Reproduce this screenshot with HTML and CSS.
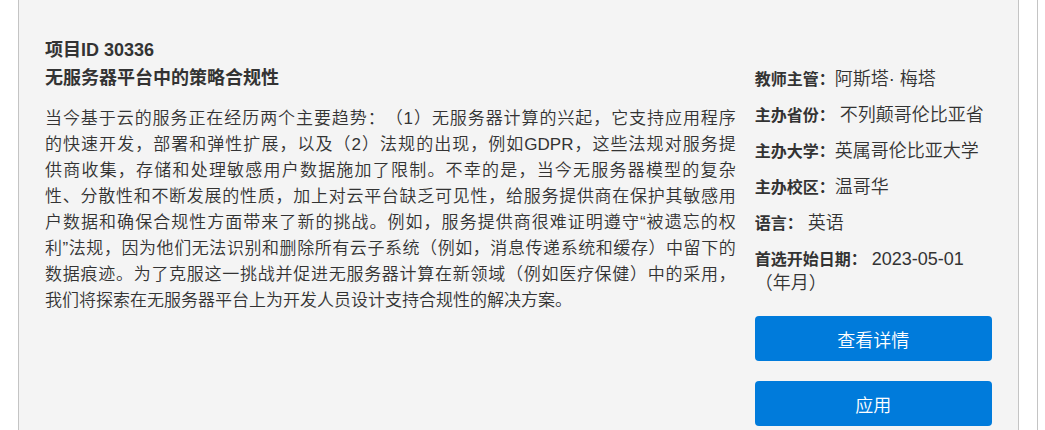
FILE: index.html
```html
<!DOCTYPE html>
<html lang="zh-CN">
<head>
<meta charset="utf-8">
<meta name="viewport" content="width=device-width, initial-scale=1">
<title>无服务器平台中的策略合规性</title>
<link rel="stylesheet" href="styles.css">
</head>
<body>
<main class="listing">
  <article class="card">
    <div class="project">
      <h2 class="project-title">项目ID 30336<br>无服务器平台中的策略合规性</h2>
      <p class="summary">
        <span class="line">当今基于云的服务正在经历两个主要趋势：（1）无服务器计算的兴起，它支持应用程序</span>
        <span class="line">的快速开发，部署和弹性扩展，以及（2）法规的出现，例如GDPR，这些法规对服务提</span>
        <span class="line">供商收集，存储和处理敏感用户数据施加了限制。不幸的是，当今无服务器模型的复杂</span>
        <span class="line">性、分散性和不断发展的性质，加上对云平台缺乏可见性，给服务提供商在保护其敏感用</span>
        <span class="line">户数据和确保合规性方面带来了新的挑战。例如，服务提供商很难证明遵守“被遗忘的权</span>
        <span class="line">利”法规，因为他们无法识别和删除所有云子系统（例如，消息传递系统和缓存）中留下的</span>
        <span class="line">数据痕迹。为了克服这一挑战并促进无服务器计算在新领域（例如医疗保健）中的采用，</span>
        <span class="line line-end">我们将探索在无服务器平台上为开发人员设计支持合规性的解决方案。</span>
      </p>
    </div>
    <aside class="details">
      <p class="fact"><strong class="label">教师主管：</strong>阿斯塔· 梅塔</p>
      <p class="fact"><strong class="label">主办省份：</strong> 不列颠哥伦比亚省</p>
      <p class="fact"><strong class="label">主办大学：</strong>英属哥伦比亚大学</p>
      <p class="fact"><strong class="label">主办校区：</strong>温哥华</p>
      <p class="fact"><strong class="label">语言：</strong> 英语</p>
      <p class="fact"><strong class="label">首选开始日期：</strong> 2023-05-01（年月）</p>
      <div class="actions">
        <button class="action" type="button">查看详情</button>
        <button class="action" type="button">应用</button>
      </div>
    </aside>
  </article>
</main>
</body>
</html>
```

FILE: styles.css
```css
* {
  box-sizing: border-box;
}

body {
  margin: 0;
  background: #fff;
  color: #333;
  font-family: "Liberation Sans", "Noto Sans CJK SC", sans-serif;
  font-size: 18px;
  font-weight: 350;
  text-spacing-trim: space-all;
}

.listing {
  min-height: 100vh;
  margin-right: 7px;
  padding: 0 18px;
  border-right: 1px solid #c4c4c4;
  display: flex;
}

.card {
  flex: 1;
  display: grid;
  grid-template-columns: minmax(0, 690fr) minmax(0, 237fr);
  column-gap: 19px;
  padding: 36px 26px 4px;
  border: solid #c4c4c4;
  border-width: 0 1px;
  background: #f4f4f4;
}

.project-title {
  margin: 0 0 14px;
  font-size: 18px;
  line-height: 28px;
}

.summary {
  margin: 0;
  font-size: 17px;
  line-height: 26px;
}

.line {
  display: block;
  text-align: justify;
  text-align-last: justify;
}

.line-end {
  text-align-last: left;
}

.details {
  padding-top: 31px;
}

.fact {
  margin: 0 0 12px;
  line-height: 24px;
}

.label {
  font-size: 16px;
  font-weight: 700;
  line-height: 1;
}

.actions {
  display: grid;
  gap: 20px;
  margin-top: 21px;
}

.action {
  height: 45px;
  border: 0;
  border-radius: 4px;
  background: #007bdb;
  color: #fff;
  font: inherit;
  cursor: pointer;
}
```
